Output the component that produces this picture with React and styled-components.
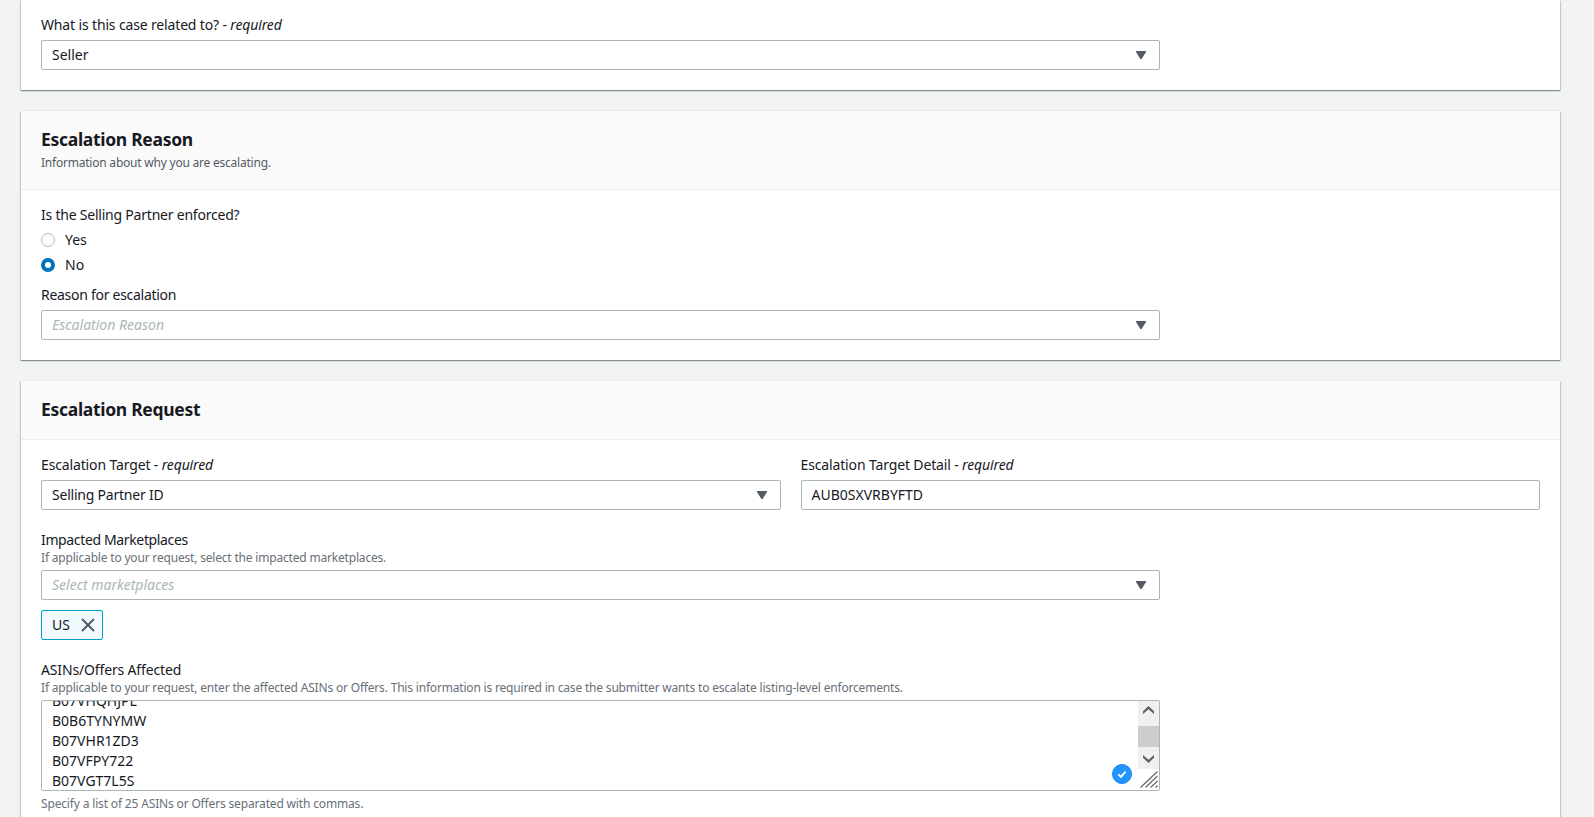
import React from 'react';
import styled, { createGlobalStyle } from 'styled-components';

const asins = ['B07VHQHJPL', 'B0B6TYNYMW', 'B07VHR1ZD3', 'B07VFPY722', 'B07VGT7L5S'];

const FieldLabel = ({ children, required, spacing }) => (
  <Label $spacing={spacing}>
    {children}
    {required && <span> - <i>required</i></span>}
  </Label>
);

const Select = ({ value, placeholder, spacing }) => (
  <Control>
    {value
      ? <Value $spacing={spacing}>{value}</Value>
      : <Placeholder $spacing={spacing}>{placeholder}</Placeholder>}
    <Caret viewBox="0 0 10 8">
      <path d="M0 0h10v1L5.6 8H4.4L0 1z" fill="#545b64" />
    </Caret>
  </Control>
);

const RadioOption = ({ label, checked }) => (
  <RadioRow>
    <RadioMark $checked={checked} />
    <Value>{label}</Value>
  </RadioRow>
);

const ScrollArrow = ({ down }) => (
  <ArrowIcon viewBox="0 0 11 8" $down={down}>
    <path d="M0 5.2 5.5 0 11 5.2V8L5.5 3.2 0 8z" fill="#606060" />
  </ArrowIcon>
);

const AsinField = () => (
  <TextArea>
    <Lines>
      {asins.map(asin => <Line key={asin}>{asin}</Line>)}
    </Lines>
    <CheckBadge viewBox="0 0 20 20">
      <circle cx="10" cy="10" r="9.5" fill="#2196ff" stroke="#1a80f0" />
      <path d="M6.5 10.4l2.4 2.5 4.7-5.3" fill="none" stroke="#fff" strokeWidth="1.8" />
    </CheckBadge>
    <ScrollColumn>
      <ScrollTrack>
        <ScrollArrow />
        <Thumb />
        <ScrollArrow down />
      </ScrollTrack>
      <Resizer viewBox="0 0 21 21">
        <path
          d="M2.5 18.5l17-16M7.5 18.5l12-11.5M12.5 18.5l7-6.5M17.5 18.5l2-2"
          fill="none"
          stroke="#6b6b6b"
          strokeWidth="1.3"
        />
      </Resizer>
    </ScrollColumn>
  </TextArea>
);

const App = () => (
  <Page>
    <GlobalStyle />
    <Card>
      <Body>
        <Field>
          <FieldLabel required spacing="-0.15px">What is this case related to?</FieldLabel>
          <Select value="Seller" />
        </Field>
      </Body>
    </Card>

    <Card>
      <Header>
        <Title>Escalation Reason</Title>
        <Subtitle>Information about why you are escalating.</Subtitle>
      </Header>
      <Body>
        <FieldLabel spacing="-0.22px">Is the Selling Partner enforced?</FieldLabel>
        <RadioGroup>
          <RadioOption label="Yes" />
          <RadioOption label="No" checked />
        </RadioGroup>
        <Field>
          <FieldLabel spacing="-0.28px">Reason for escalation</FieldLabel>
          <Select placeholder="Escalation Reason" />
        </Field>
      </Body>
    </Card>

    <Card>
      <Header>
        <Title>Escalation Request</Title>
      </Header>
      <Body>
        <Columns>
          <div>
            <FieldLabel required spacing="-0.14px">Escalation Target</FieldLabel>
            <Select value="Selling Partner ID" spacing="-0.22px" />
          </div>
          <div>
            <FieldLabel required spacing="-0.14px">Escalation Target Detail</FieldLabel>
            <Control>
              <Value>AUB0SXVRBYFTD</Value>
            </Control>
          </div>
        </Columns>
        <Field>
          <Label $tight $spacing="-0.36px">Impacted Marketplaces</Label>
          <Description>If applicable to your request, select the impacted marketplaces.</Description>
          <Select placeholder="Select marketplaces" />
          <Tag>
            <Value>US</Value>
            <CloseIcon viewBox="0 0 14 14">
              <path d="M1 1l12 12M13 1L1 13" stroke="#545b64" strokeWidth="2" />
            </CloseIcon>
          </Tag>
        </Field>
        <Field>
          <Label $tight $spacing="-0.15px">ASINs/Offers Affected</Label>
          <Description>
            If applicable to your request, enter the affected ASINs or Offers. This information is required in case the submitter wants to escalate listing-level enforcements.
          </Description>
          <AsinField />
          <Hint>Specify a list of 25 ASINs or Offers separated with commas.</Hint>
        </Field>
      </Body>
    </Card>
  </Page>
);

export default App;

const GlobalStyle = createGlobalStyle`
  * {
    box-sizing: border-box;
  }

  body {
    margin: 0;
    background: #f2f3f3;
    color: #16191f;
    font-family: "Noto Sans", "Open Sans", sans-serif;
    font-size: 14px;
    line-height: 22px;
  }
`;

const Page = styled.div`
  display: flex;
  flex-direction: column;
  gap: 21px;
  height: 817px;
  padding: 0 34px 0 21px;
  overflow: hidden;
`;

const Card = styled.section`
  flex: none;
  background: #fff;
  box-shadow: 0 -1px 0 0 #eaeded, 0 1px 1px 0 rgba(0, 40, 40, 0.28), 1px 1px 1px 0 rgba(0, 28, 36, 0.15), -1px 1px 1px 0 rgba(0, 28, 36, 0.15);
`;

const Header = styled.header`
  padding: 17px 20px 19px;
  background: #fafafa;
  border-bottom: 1px solid #eaeded;
`;

const Title = styled.h2`
  margin: 0;
  font-size: 17.5px;
  font-weight: 700;
  letter-spacing: -0.3px;
  line-height: 22px;
`;

const Subtitle = styled.div`
  margin: 2px 0 -4px;
  color: #545b64;
  font-size: 12px;
  letter-spacing: -0.22px;
  line-height: 22px;
`;

const Body = styled.div`
  padding: 14px 20px 20px;
`;

const Field = styled.div`
  width: calc(75% - 5px);

  & + & {
    margin-top: 19px;
  }
`;

const Columns = styled.div`
  display: grid;
  grid-template-columns: 1fr 1fr;
  gap: 20px;
  margin-bottom: 19px;
`;

const Label = styled.div`
  padding-bottom: ${({ $tight }) => ($tight ? 0 : '4px')};
  letter-spacing: ${({ $spacing }) => $spacing || 'normal'};
  white-space: nowrap;
`;

const Description = styled.div`
  margin-top: -1px;
  padding-bottom: 4px;
  color: #687078;
  font-size: 12px;
  letter-spacing: -0.186px;
  line-height: 16px;
  white-space: nowrap;
`;

const Hint = styled(Description)`
  margin: 0;
  padding: 5px 0 0;
  letter-spacing: -0.16px;
`;

const Control = styled.div`
  display: flex;
  align-items: center;
  justify-content: space-between;
  height: 30px;
  padding: 0 13px 0 10px;
  border: 1px solid #aab7b8;
  border-radius: 2px;
  background: #fff;
`;

const Value = styled.span`
  letter-spacing: ${({ $spacing }) => $spacing || 'normal'};
`;

const Placeholder = styled(Value)`
  color: #aab7b8;
  font-style: italic;
`;

const Caret = styled.svg`
  width: 10px;
  height: 8px;
`;

const RadioGroup = styled.div`
  margin-top: -3px;
  padding-bottom: 7px;
`;

const RadioRow = styled.div`
  display: flex;
  align-items: center;
  gap: 10px;
  height: 25px;
`;

const RadioMark = styled.span`
  width: 14px;
  height: 14px;
  border: ${({ $checked }) => ($checked ? '4px solid #0073bb' : '1px solid #aab7b8')};
  border-radius: 50%;
  background: #fff;
`;

const Tag = styled.div`
  display: flex;
  align-items: center;
  justify-content: space-between;
  width: 62px;
  height: 30px;
  margin-top: 10px;
  padding: 0 7px 0 10px;
  border: 1px solid #00a1c9;
  border-radius: 2px;
  background: #f1faff;
`;

const CloseIcon = styled.svg`
  width: 14px;
  height: 14px;
`;

const TextArea = styled.div`
  position: relative;
  display: flex;
  justify-content: space-between;
  height: 91px;
  border: 1px solid #aab7b8;
  border-radius: 2px;
  overflow: hidden;
`;

/* scrolled down by half a line */
const Lines = styled.div`
  margin-top: -10px;
  padding-left: 10px;
`;

const Line = styled.div`
  height: 20px;
  line-height: 20px;
`;

const CheckBadge = styled.svg`
  position: absolute;
  right: 27px;
  bottom: 6px;
  width: 20px;
  height: 20px;
`;

const ScrollColumn = styled.div`
  display: flex;
  flex-direction: column;
  width: 21px;
`;

const ScrollTrack = styled.div`
  display: flex;
  flex-direction: column;
  align-items: center;
  height: 68px;
  padding-top: 5px;
  background: #f0f0f0;
`;

const Thumb = styled.div`
  width: 21px;
  height: 21px;
  margin: 12px 0 8px;
  background: #cdcdcd;
`;

const ArrowIcon = styled.svg`
  width: 11px;
  height: 8px;
  transform: ${({ $down }) => ($down ? 'rotate(180deg)' : 'none')};
`;

const Resizer = styled.svg`
  width: 21px;
  height: 21px;
`;
